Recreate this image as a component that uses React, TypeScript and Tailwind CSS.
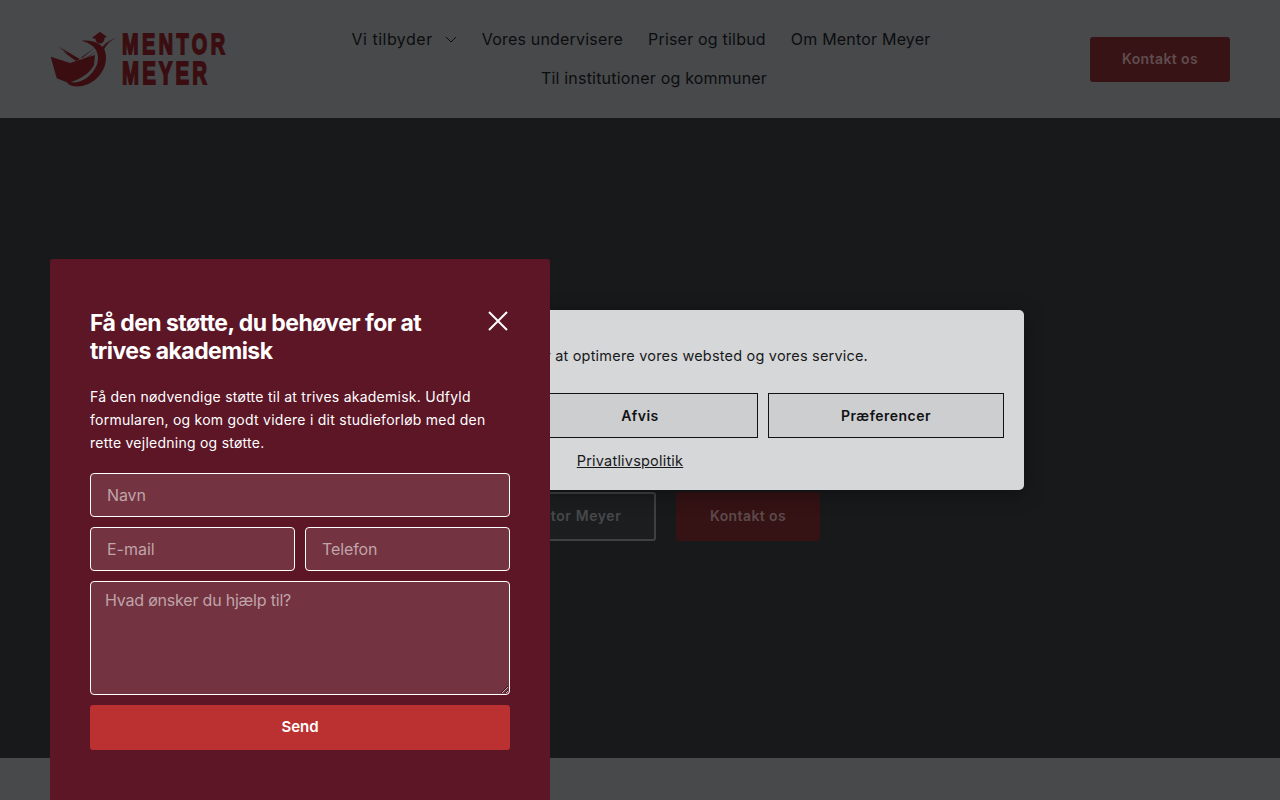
const sans = "font-['Inter','Noto_Sans',sans-serif]";

function Logo() {
  const face = "'Liberation Sans',sans-serif";
  return (
    <svg width="180" height="68" viewBox="0 0 180 68" className="shrink-0" fill="#3a0e11">
      <path d="M0.700 31.700 L20 38 L45 30 L44 40 C40 48 30 55 18 57.700 L6.700 53.300 Z" />
      <path d="M9 21.700 L28.300 33.300 L25 35 Z" />
      <path d="M13 26.500 L30 34 L26 36 Z" />
      <path d="M45 22.500 L33 32.500 L30.500 33 Z M47 26 L36 33.500 L33 34.500 Z" />
      <path d="M31.700 15.700 C42 14.500 52 18 55 26 C58 36 54 47 46 54 C38 61 26 64 18 59 C17.500 57.500 17.500 56.500 17.700 55.500 C24 60 34 56 40 50 C48 42 50 33 46 25 C43 20 38 17.500 31.700 15.700 Z" />
      <path d="M66 13 C59 16 54 22 52 30 C50.500 26 48 23.500 46 21 C48 22 50 23.500 51 24.500 C54 18.500 60 15 66 13 Z" />
      <path d="M42 12.700 L50 6.700 L56.700 11.700 L54.500 13 C54.500 16 52.500 18.500 50 18.500 C47.500 18.500 45.500 16.500 45.500 14 Z" />
      <text transform="translate(72 29) scale(0.66 1)" fontFamily={face} fontWeight="700" fontSize="30" stroke="#3a0e11" strokeWidth="1.800" textLength="156" lengthAdjust="spacing">MENTOR</text>
      <text transform="translate(72 59) scale(0.66 1)" fontFamily={face} fontWeight="700" fontSize="31" stroke="#3a0e11" strokeWidth="1.800" textLength="129" lengthAdjust="spacing">MEYER</text>
    </svg>
  );
}

export default function App() {
  return (
    <div className={`relative h-[800px] w-[1280px] overflow-hidden bg-[#47494b] ${sans}`}>
      <header className="flex h-[118px] items-center bg-[#47494b] px-[50px]">
        <Logo />
        <nav className="ml-[91px] -mt-[2px] flex w-[640px] flex-wrap justify-center gap-x-[25px] gap-y-[19px] text-[16px] font-normal leading-[20px] tracking-[0.2px] text-[#0c0d0f]">
          <span className="flex items-center gap-[12px] tracking-[0.5px]">Vi tilbyder
            <svg width="12" height="12" viewBox="0 0 12 12" fill="none" stroke="#0c0d0f" strokeWidth="1"><path d="M1 4 L6 9 L11 4" /></svg>
          </span>
          <span>Vores undervisere</span>
          <span>Priser og tilbud</span>
          <span>Om Mentor Meyer</span>
          <span className="ml-[26px]">Til institutioner og kommuner</span>
        </nav>
        <button className="ml-auto h-[45px] w-[140px] shrink-0 rounded-[3px] bg-[#381316] pb-[2px] text-[14px] font-semibold tracking-[0.4px] text-[#5f4d4f]">Kontakt os</button>
      </header>

      <main className="flex h-[640px] justify-end bg-[#18191b] pr-[460px] pt-[374px]">
        <div className="flex h-[49px] gap-[20px]">
          <button className="h-[49px] w-[200px] rounded-[3px] border-2 border-[#3e4042] bg-[#1c1d1f] pb-[2px] text-[14px] font-semibold tracking-[0.6px] text-[#47494b]">Om Mentor Meyer</button>
          <button className="h-[49px] w-[144px] rounded-[3px] bg-[#351214] pb-[2px] text-[14px] font-semibold tracking-[0.4px] text-[#5d4a4c]">Kontakt os</button>
        </div>
      </main>

      <section className="absolute left-[236px] top-[310px] h-[180px] w-[788px] rounded-[5px] bg-[#d6d7d9] px-[20px] pt-[35px] shadow-[0_4px_20px_rgba(0,0,0,0.35)]">
        <p className="pr-[136px] text-right text-[14.500px] leading-[22px] tracking-[0.2px] text-[#18191b]">Vi bruger cookies for at optimere vores websted og vores service.</p>
        <div className="mt-[26px] flex justify-end gap-[10px]">
          <button className="h-[45px] w-[236px] border border-[#111214] bg-[#cdced0] text-[14px] font-semibold tracking-[0.5px] text-[#111214]">Accepter</button>
          <button className="h-[45px] w-[236px] border border-[#111214] bg-[#cdced0] text-[14px] font-semibold tracking-[0.5px] text-[#111214]">Afvis</button>
          <button className="h-[45px] w-[236px] border border-[#111214] bg-[#cdced0] text-[14px] font-semibold tracking-[0.5px] text-[#111214]">Præferencer</button>
        </div>
        <a className="mt-[12px] block text-center text-[14.500px] leading-[22px] tracking-[0.2px] text-[#18191b] underline">Privatlivspolitik</a>
      </section>

      <aside className="absolute left-[50px] top-[259px] h-[560px] w-[500px] rounded-[3px] bg-[#5c1626] px-[40px] pt-[50px] text-white">
        <div className="flex items-start justify-between pr-[2px]">
          <h2 className="w-[345px] text-[23px] font-bold leading-[28px] tracking-[-0.55px]">Få den støtte, du behøver for at trives akademisk</h2>
          <svg width="20" height="20" viewBox="0 0 20 20" fill="none" stroke="#ffffff" strokeWidth="2" className="mt-[2px]"><path d="M1 1 L19 19 M19 1 L1 19" /></svg>
        </div>
        <p className="mt-[20px] text-[14px] leading-[23px] tracking-[0.25px]">Få den nødvendige støtte til at trives akademisk. Udfyld formularen, og kom godt videre i dit studieforløb med den rette vejledning og støtte.</p>
        <form className="mt-[19px] flex flex-col gap-[10px]">
          <input placeholder="Navn" className="h-[44px] w-full rounded-[4px] border border-white bg-[#743340] px-[16px] text-[16px] tracking-[-0.1px] placeholder:text-[#bfa4aa]" />
          <div className="flex gap-[10px]">
            <input placeholder="E-mail" className="h-[44px] w-[205px] rounded-[4px] border border-white bg-[#743340] px-[16px] text-[16px] placeholder:text-[#bfa4aa]" />
            <input placeholder="Telefon" className="h-[44px] w-[205px] rounded-[4px] border border-white bg-[#743340] px-[16px] text-[16px] tracking-[-0.1px] placeholder:text-[#bfa4aa]" />
          </div>
          <textarea placeholder="Hvad ønsker du hjælp til?" className="block h-[114px] w-full rounded-[4px] border border-white bg-[#743340] px-[14px] py-[6px] text-[16px] leading-[24px] tracking-[-0.2px] placeholder:text-[#bfa4aa]" />
          <button type="button" className="h-[45px] w-full rounded-[3px] bg-[#bb3030] text-[15px] font-semibold text-white">Send</button>
        </form>
      </aside>
    </div>
  );
}
